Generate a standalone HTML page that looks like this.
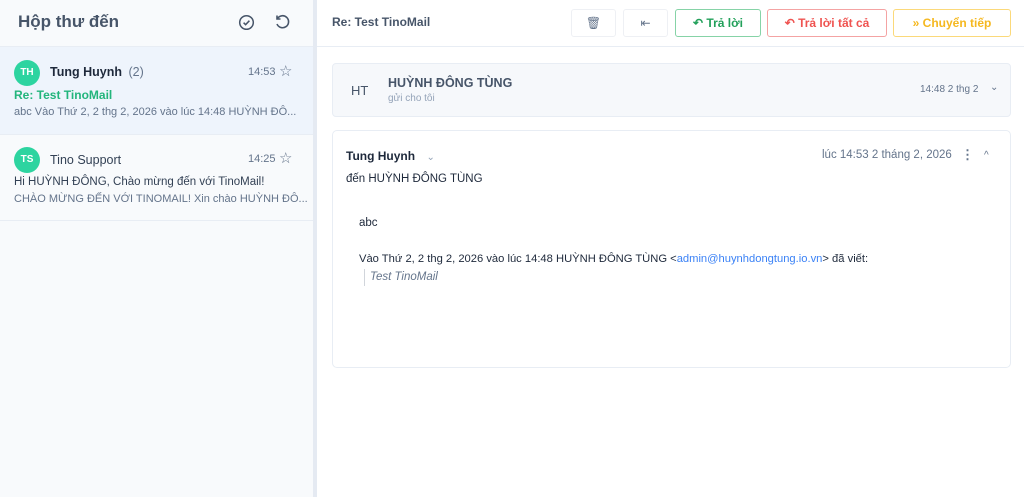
<!DOCTYPE html>
<html><head><meta charset="utf-8"><style>
*{box-sizing:border-box;margin:0;padding:0}
body{width:1024px;height:497px;overflow:hidden;font-family:"Liberation Sans",sans-serif;background:#fff;position:relative;color:#1e293b}
.abs{position:absolute}
#left{left:0;top:0;width:313px;height:497px;background:#f8fafc;overflow:hidden}
#div{left:313px;top:0;width:4px;height:497px;background:#e5eaf2}
.t{position:absolute;white-space:nowrap}
.av{position:absolute;width:26px;height:26px;border-radius:50%;background:#2dd4a0;color:#fff;font-size:10px;font-weight:bold;text-align:center;line-height:26px}
.btn{position:absolute;top:9px;height:28px;border:1px solid;border-radius:3px;font-size:12px;font-weight:bold;text-align:center;line-height:26px;background:#fff}
</style></head><body>
<div id="left" class="abs">
  <div class="t" style="left:18px;top:12px;font-size:17px;font-weight:bold;color:#475569">Hộp thư đến</div>
  <svg class="abs" style="left:238px;top:14px" width="17" height="17" viewBox="0 0 17 17"><circle cx="8.5" cy="8.5" r="6.8" fill="none" stroke="#475569" stroke-width="1.5"/><path d="M5.6 8.7l2 2 3.8-4" fill="none" stroke="#475569" stroke-width="1.5"/></svg>
  <svg class="abs" style="left:274px;top:14px" width="17" height="17" viewBox="0 0 17 17"><path d="M3.5 4.5A6 6 0 1 1 3 10" fill="none" stroke="#475569" stroke-width="1.6"/><path d="M3 1.5v3.5h3.5" fill="none" stroke="#475569" stroke-width="1.6"/></svg>
  <div class="abs" style="left:0;top:46px;width:313px;height:1px;background:#e8edf4"></div>
  <div class="abs" style="left:0;top:47px;width:313px;height:87px;background:#eef4fc"></div>
  <div class="abs" style="left:0;top:134px;width:313px;height:1px;background:#e8edf4"></div>
  <div class="av" style="left:14px;top:60px">TH</div>
  <div class="t" style="left:50px;top:65px;font-size:12.5px;font-weight:bold;color:#1e293b">Tung Huynh <span style="font-weight:normal;color:#64748b;margin-left:3px">(2)</span></div>
  <div class="t" style="left:248px;top:66px;font-size:11px;color:#64748b">14:53</div>
  <div class="t" style="left:279px;top:62px;font-size:15px;color:#64748b">☆</div>
  <div class="t" style="left:14px;top:88px;font-size:12px;font-weight:bold;color:#22b57c">Re: Test TinoMail</div>
  <div class="t" style="left:14px;top:106px;font-size:11px;color:#64748b">abc Vào Thứ 2, 2 thg 2, 2026 vào lúc 14:48 HUỲNH ĐÔ...</div>
  <div class="av" style="left:14px;top:147px">TS</div>
  <div class="t" style="left:50px;top:153px;font-size:12.5px;color:#334155">Tino Support</div>
  <div class="t" style="left:248px;top:153px;font-size:11px;color:#64748b">14:25</div>
  <div class="t" style="left:279px;top:149px;font-size:15px;color:#64748b">☆</div>
  <div class="t" style="left:14px;top:176px;font-size:11.5px;color:#334155">Hi HUỲNH ĐÔNG, Chào mừng đến với TinoMail!</div>
  <div class="t" style="left:14px;top:193px;font-size:11px;color:#64748b">CHÀO MỪNG ĐẾN VỚI TINOMAIL! Xin chào HUỲNH ĐÔ...</div>
  <div class="abs" style="left:0;top:220px;width:313px;height:1px;background:#e8edf4"></div>
</div>
<div id="div" class="abs"></div>
<div class="t" style="left:332px;top:15px;font-size:12px;font-weight:bold;color:#475569">Re: Test TinoMail</div>
<div class="btn" style="left:571px;width:45px;border-color:#eef0f4;color:#64748b;font-weight:normal">🗑</div>
<div class="btn" style="left:623px;width:45px;border-color:#eef0f4;color:#64748b;font-weight:normal">⇤</div>
<div class="btn" style="left:675px;width:86px;border-color:#86d3a7;color:#22a05a">↶ Trả lời</div>
<div class="btn" style="left:767px;width:120px;border-color:#f4a3a3;color:#ef5350">↶ Trả lời tất cả</div>
<div class="btn" style="left:893px;width:118px;border-color:#fbd97a;color:#f5b820">» Chuyển tiếp</div>
<div class="abs" style="left:317px;top:46px;width:707px;height:1px;background:#e8edf4"></div>
<div class="abs" style="left:332px;top:63px;width:679px;height:54px;background:#f6f8fb;border:1px solid #e8edf4;border-radius:4px"></div>
<div class="t" style="left:351px;top:83px;font-size:13px;color:#475569">HT</div>
<div class="t" style="left:388px;top:76px;font-size:12.5px;font-weight:bold;color:#475569">HUỲNH ĐÔNG TÙNG</div>
<div class="t" style="left:388px;top:93px;font-size:10px;color:#94a3b8">gửi cho tôi</div>
<div class="t" style="left:920px;top:84px;font-size:10px;color:#64748b">14:48 2 thg 2</div>
<div class="t" style="left:990px;top:82px;font-size:10px;color:#64748b">⌄</div>
<div class="abs" style="left:332px;top:130px;width:679px;height:238px;background:#fff;border:1px solid #e8edf4;border-radius:5px"></div>
<div class="t" style="left:346px;top:149px;font-size:12px;font-weight:bold;color:#1e293b">Tung Huynh <span style="font-weight:normal;color:#94a3b8;font-size:10px;margin-left:8px">⌄</span></div>
<div class="t" style="left:822px;top:149px;font-size:11.5px;color:#64748b">lúc 14:53 2 tháng 2, 2026</div>
<div class="t" style="left:961px;top:147px;font-size:13px;font-weight:bold;color:#64748b">⋮</div>
<div class="t" style="left:984px;top:150px;font-size:10px;color:#64748b">^</div>
<div class="t" style="left:346px;top:173px;font-size:11.5px;color:#1e293b">đến HUỲNH ĐÔNG TÙNG</div>
<div class="t" style="left:359px;top:217px;font-size:11.5px;color:#1e293b">abc</div>
<div class="t" style="left:359px;top:253px;font-size:11.2px;color:#1e293b">Vào Thứ 2, 2 thg 2, 2026 vào lúc 14:48 HUỲNH ĐÔNG TÙNG &lt;<span style="color:#3b82f6">admin@huynhdongtung.io.vn</span>&gt; đã viết:</div>
<div class="abs" style="left:364px;top:269px;width:1px;height:17px;background:#d1d5db"></div>
<div class="t" style="left:370px;top:271px;font-size:11.5px;font-style:italic;color:#64748b">Test TinoMail</div>
</body></html>
